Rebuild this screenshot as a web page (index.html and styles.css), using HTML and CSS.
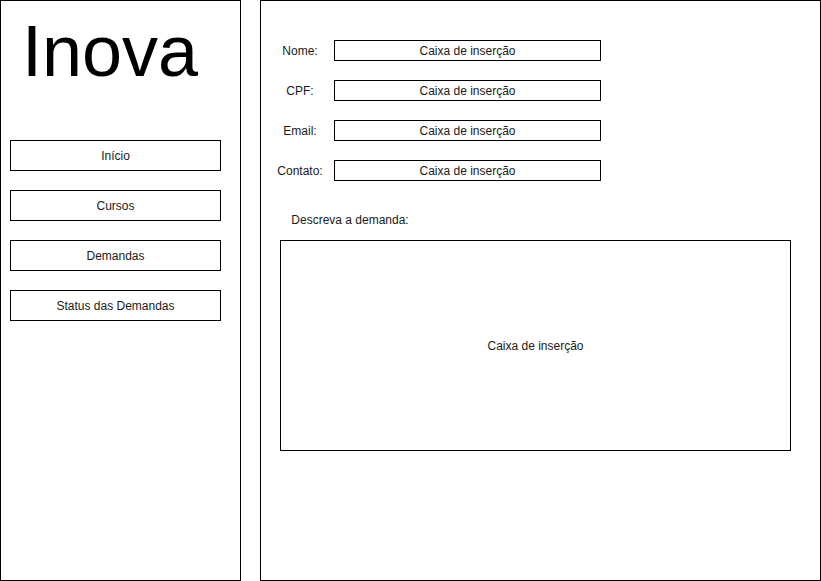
FILE: index.html
```html
<!DOCTYPE html>
<html lang="pt">
<head>
<meta charset="utf-8">
<title>Inova</title>
<link rel="stylesheet" href="styles.css">
</head>
<body>
<div class="page">
  <aside class="sidebar">
    <div class="logo">Inova</div>
    <nav class="nav">
      <div class="nav-item">Início</div>
      <div class="nav-item">Cursos</div>
      <div class="nav-item">Demandas</div>
      <div class="nav-item">Status das Demandas</div>
    </nav>
  </aside>
  <main class="main">
    <div class="form">
      <div class="label">Nome:</div><div class="field">Caixa de inserção</div>
      <div class="label">CPF:</div><div class="field">Caixa de inserção</div>
      <div class="label">Email:</div><div class="field">Caixa de inserção</div>
      <div class="label">Contato:</div><div class="field">Caixa de inserção</div>
    </div>
    <div class="desc">
      <div class="desc-label">Descreva a demanda:</div>
      <div class="desc-box">Caixa de inserção</div>
    </div>
  </main>
</div>
</body>
</html>
```

FILE: styles.css
```css
* { box-sizing: border-box; }
html, body { margin: 0; padding: 0; background: #fff; }
body {
  font-family: "Liberation Sans", Arial, Helvetica, sans-serif;
  font-size: 12px;
  color: #1a1a1a;
}
.page {
  display: flex;
  gap: 19px;
  width: 821px;
  height: 581px;
}
.sidebar {
  width: 241px;
  height: 581px;
  border: 1px solid #000;
  padding: 9px 0 0 9px;
}
.logo {
  font-size: 72px;
  line-height: 82px;
  height: 82px;
  margin-left: 12px;
  color: #000;
}
.nav {
  margin-top: 48px;
  display: flex;
  flex-direction: column;
  gap: 19px;
}
.nav-item {
  width: 211px;
  height: 31px;
  border: 1px solid #000;
  display: flex;
  align-items: center;
  justify-content: center;
}
.main {
  width: 561px;
  height: 581px;
  border: 1px solid #000;
  padding: 39px 0 0 9px;
}
.form {
  display: grid;
  grid-template-columns: 60px 267px;
  column-gap: 4px;
  row-gap: 19px;
  grid-auto-rows: 21px;
}
.label {
  display: flex;
  align-items: center;
  justify-content: center;
}
.field {
  border: 1px solid #000;
  display: flex;
  align-items: center;
  justify-content: center;
}
.desc {
  margin-top: 29px;
  margin-left: 10px;
}
.desc-label {
  width: 140px;
  height: 20px;
  line-height: 20px;
  text-align: center;
  margin-bottom: 10px;
}
.desc-box {
  width: 511px;
  height: 211px;
  border: 1px solid #000;
  display: flex;
  align-items: center;
  justify-content: center;
}
```
